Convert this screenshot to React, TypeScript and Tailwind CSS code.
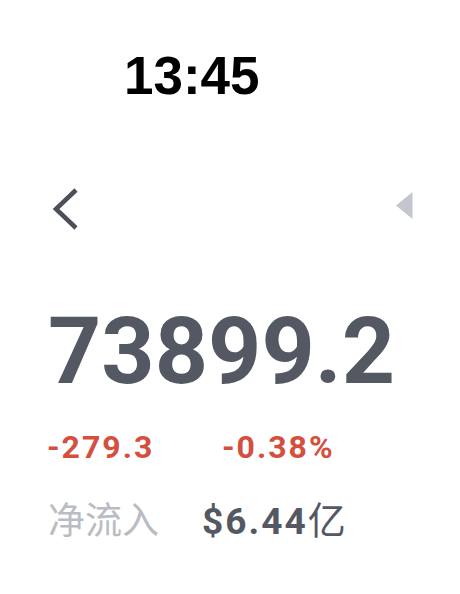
const App = () => {
  return (
    <div className="w-[460px] h-[594px] bg-white flex flex-col font-['Roboto','Liberation_Sans','Noto_Sans_CJK_SC',sans-serif]">
      <div className="pt-[46px] pl-[124px] h-[110px]">
        <span className="text-[53px] leading-[60px] font-bold text-black font-['Liberation_Sans',sans-serif]">
          13:45
        </span>
      </div>
      <div className="flex flex-row items-center justify-between pl-[51px] pr-[47px] mt-[76px] h-[46px]">
        <svg width="28" height="44" viewBox="0 0 28 44">
          <path d="M25 3 L5 22 L25 41" fill="none" stroke="#4b4f57" strokeWidth="4.5" />
        </svg>
        <svg width="18" height="44" viewBox="0 0 18 44">
          <path d="M17.5 5 L17.5 32 L1 18.5 Z" fill="#c3c7cd" />
        </svg>
      </div>
      <div className="pl-[48px] mt-[70px]">
        <span className="text-[93px] leading-[100px] font-bold text-[#545862]">
          73899.2
        </span>
      </div>
      <div className="flex flex-row pl-[47px] mt-[27px] text-[32px] leading-[36px] font-bold text-[#d44f3e] tracking-[2px]">
        <span className="w-[175px]">-279.3</span>
        <span>-0.38%</span>
      </div>
      <div className="flex flex-row items-baseline pl-[48px] mt-[31px]">
        <span className="w-[154px] text-[37px] leading-[44px] text-[#b9bdc3] font-['Noto_Sans_CJK_SC',sans-serif]">
          净流入
        </span>
        <span className="text-[37px] leading-[44px] font-bold text-[#545862] tracking-[2px]">
          $6.44
          <span className="font-normal tracking-[0px] text-[38px] font-['Noto_Sans_CJK_SC',sans-serif]">亿</span>
        </span>
      </div>
    </div>
  );
};

export default App;
